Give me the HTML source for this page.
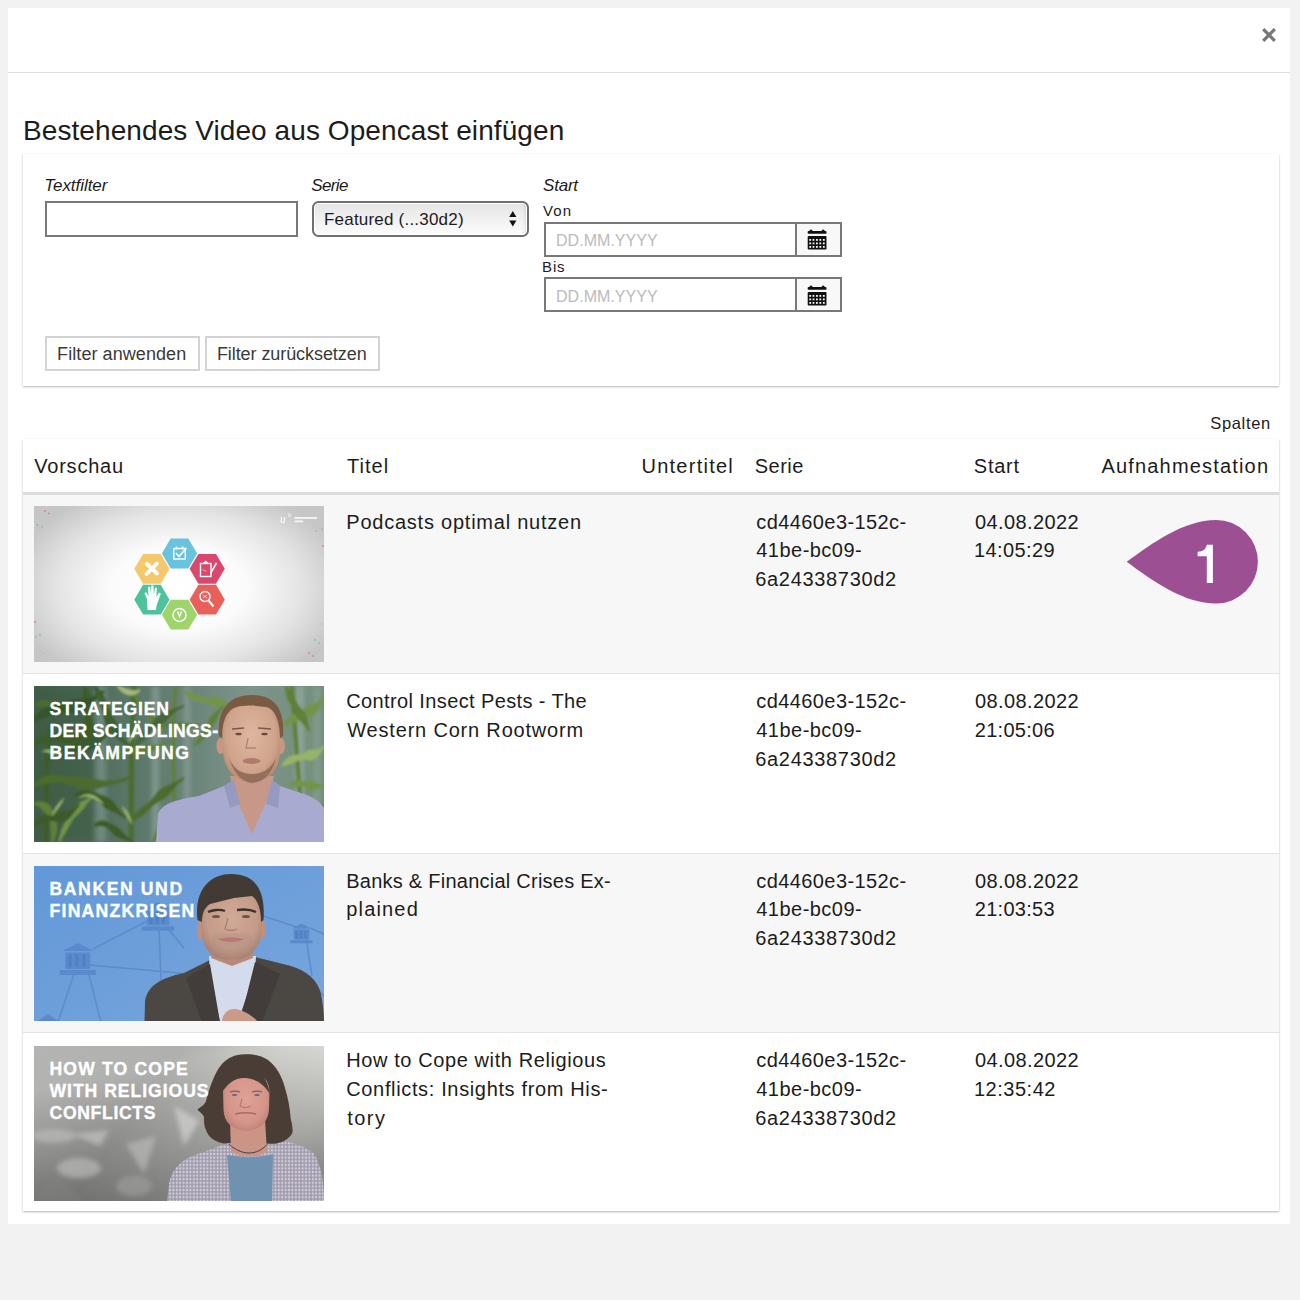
<!DOCTYPE html>
<html><head><meta charset="utf-8"><style>
html,body{margin:0;padding:0;}
body{width:1300px;height:1300px;background:#f2f2f2;position:relative;overflow:hidden;font-family:"Liberation Sans",sans-serif;}
.t{position:absolute;white-space:nowrap;}
.modal{position:absolute;left:8px;top:8px;width:1282px;height:1216px;background:#fff;}
.hline{position:absolute;left:8px;top:72px;width:1282px;height:1px;background:#dedede;}
.card{position:absolute;background:#fff;box-shadow:0 1px 2px rgba(0,0,0,0.3);}
.inp{position:absolute;box-sizing:border-box;border:2px solid #787878;background:#fff;}
.calbtn{position:absolute;box-sizing:border-box;border:2px solid #787878;background:#f8f8f8;}
.sel{position:absolute;box-sizing:border-box;border:2px solid #707070;border-radius:6.5px;background:linear-gradient(#e5e5e5,#fcfcfc);box-shadow:inset 0 0 0 1px #fff, inset -5px 0 4px -4px rgba(0,0,0,0.15);}
.btn{position:absolute;box-sizing:border-box;border:2px solid #d3d3d3;background:#fff;}
.thumb{position:absolute;overflow:hidden;background:#888;}
</style></head><body>
<div class="modal"></div>
<div class="hline"></div>
<svg class="close" width="16" height="16" viewBox="0 0 16 16" style="position:absolute;left:1261px;top:27px"><path d="M2.2 2.2L13.8 13.8M13.8 2.2L2.2 13.8" stroke="#777" stroke-width="3.3" stroke-linecap="butt"/></svg>
<div class="card" style="left:23px;top:154px;width:1256px;height:232px"></div>
<div class="inp" style="left:45px;top:201.2px;width:252.5px;height:36.3px"></div>
<div class="sel" style="left:312px;top:201.2px;width:217px;height:36.3px"></div>
<svg width="10" height="18" style="position:absolute;left:508px;top:210px"><path d="M1.2 7L4.8 1.1L8.4 7Z M1.2 10.4L4.8 16.6L8.4 10.4Z" fill="#111"/></svg>
<div class="inp" style="left:543.5px;top:221.5px;width:298.5px;height:35px"></div>
<div class="calbtn" style="left:794.7px;top:221.5px;width:47.3px;height:35px"></div>
<svg width="22" height="24" viewBox="0 0 22 24" style="position:absolute;left:807px;top:228.0px"><rect x="0.7" y="3" width="18.8" height="2.8" rx="0.9" fill="#111"/><circle cx="4" cy="2.9" r="1.5" fill="#111"/><circle cx="16.2" cy="2.9" r="1.5" fill="#111"/><rect x="0.7" y="7.9" width="18.8" height="13.6" rx="0.9" fill="#111"/><rect x="2.30" y="11.00" width="1.8" height="1.8" fill="#f8f8f8"/><rect x="5.60" y="11.00" width="1.8" height="1.8" fill="#f8f8f8"/><rect x="9.00" y="11.00" width="1.8" height="1.8" fill="#f8f8f8"/><rect x="12.40" y="11.00" width="1.8" height="1.8" fill="#f8f8f8"/><rect x="15.90" y="11.00" width="1.8" height="1.8" fill="#f8f8f8"/><rect x="2.30" y="14.50" width="1.8" height="1.8" fill="#f8f8f8"/><rect x="5.60" y="14.50" width="1.8" height="1.8" fill="#f8f8f8"/><rect x="9.00" y="14.50" width="1.8" height="1.8" fill="#f8f8f8"/><rect x="12.40" y="14.50" width="1.8" height="1.8" fill="#f8f8f8"/><rect x="15.90" y="14.50" width="1.8" height="1.8" fill="#f8f8f8"/><rect x="2.30" y="18.00" width="1.8" height="1.8" fill="#f8f8f8"/><rect x="5.60" y="18.00" width="1.8" height="1.8" fill="#f8f8f8"/><rect x="9.00" y="18.00" width="1.8" height="1.8" fill="#f8f8f8"/><rect x="12.40" y="18.00" width="1.8" height="1.8" fill="#f8f8f8"/><rect x="15.90" y="18.00" width="1.8" height="1.8" fill="#f8f8f8"/></svg>
<div class="inp" style="left:543.5px;top:277.4px;width:298.5px;height:35px"></div>
<div class="calbtn" style="left:794.7px;top:277.4px;width:47.3px;height:35px"></div>
<svg width="22" height="24" viewBox="0 0 22 24" style="position:absolute;left:807px;top:283.9px"><rect x="0.7" y="3" width="18.8" height="2.8" rx="0.9" fill="#111"/><circle cx="4" cy="2.9" r="1.5" fill="#111"/><circle cx="16.2" cy="2.9" r="1.5" fill="#111"/><rect x="0.7" y="7.9" width="18.8" height="13.6" rx="0.9" fill="#111"/><rect x="2.30" y="11.00" width="1.8" height="1.8" fill="#f8f8f8"/><rect x="5.60" y="11.00" width="1.8" height="1.8" fill="#f8f8f8"/><rect x="9.00" y="11.00" width="1.8" height="1.8" fill="#f8f8f8"/><rect x="12.40" y="11.00" width="1.8" height="1.8" fill="#f8f8f8"/><rect x="15.90" y="11.00" width="1.8" height="1.8" fill="#f8f8f8"/><rect x="2.30" y="14.50" width="1.8" height="1.8" fill="#f8f8f8"/><rect x="5.60" y="14.50" width="1.8" height="1.8" fill="#f8f8f8"/><rect x="9.00" y="14.50" width="1.8" height="1.8" fill="#f8f8f8"/><rect x="12.40" y="14.50" width="1.8" height="1.8" fill="#f8f8f8"/><rect x="15.90" y="14.50" width="1.8" height="1.8" fill="#f8f8f8"/><rect x="2.30" y="18.00" width="1.8" height="1.8" fill="#f8f8f8"/><rect x="5.60" y="18.00" width="1.8" height="1.8" fill="#f8f8f8"/><rect x="9.00" y="18.00" width="1.8" height="1.8" fill="#f8f8f8"/><rect x="12.40" y="18.00" width="1.8" height="1.8" fill="#f8f8f8"/><rect x="15.90" y="18.00" width="1.8" height="1.8" fill="#f8f8f8"/></svg>
<div class="btn" style="left:45px;top:336px;width:154.5px;height:34.5px"></div>
<div class="btn" style="left:205px;top:336px;width:174.5px;height:34.5px"></div>
<div class="card" style="left:23px;top:438.5px;width:1256px;height:772.5px"></div>
<div style="position:absolute;left:23px;top:492px;width:1256px;height:2.5px;background:#dcdcdc"></div>
<div style="position:absolute;left:23px;top:494.5px;width:1256px;height:179.5px;background:#f7f7f7"></div>
<div style="position:absolute;left:23px;top:674px;width:1256px;height:179.5px;background:#fff"></div>
<div style="position:absolute;left:23px;top:673px;width:1256px;height:1px;background:#e3e3e3"></div>
<div style="position:absolute;left:23px;top:853.5px;width:1256px;height:179.5px;background:#f7f7f7"></div>
<div style="position:absolute;left:23px;top:852.5px;width:1256px;height:1px;background:#e3e3e3"></div>
<div style="position:absolute;left:23px;top:1033px;width:1256px;height:178px;background:#fff"></div>
<div style="position:absolute;left:23px;top:1032px;width:1256px;height:1px;background:#e3e3e3"></div>
<div class="thumb" style="left:34px;top:506px;width:290px;height:155.5px"><svg width="290" height="156" viewBox="0 0 290 156" style="display:block"><defs><radialGradient id="g1" cx="145" cy="82" r="170" gradientUnits="userSpaceOnUse" gradientTransform="translate(145 82) scale(1 0.62) translate(-145 -82)"><stop offset="0" stop-color="#ffffff"/><stop offset="0.4" stop-color="#fbfbfb"/><stop offset="0.72" stop-color="#e4e4e4"/><stop offset="1" stop-color="#c6c6c6"/></radialGradient></defs><rect width="290" height="156" fill="url(#g1)"/><path d="M127.9 47.5 L136.7 32.6 L154.3 32.6 L163.1 47.5 L154.3 62.4 L136.7 62.4Z" fill="#67c3de"/><path d="M100.3 62.8 L109.1 47.9 L126.7 47.9 L135.5 62.8 L126.7 77.7 L109.1 77.7Z" fill="#f4c86c"/><path d="M155.6 62.8 L164.4 47.9 L182.0 47.9 L190.8 62.8 L182.0 77.7 L164.4 77.7Z" fill="#d9486c"/><path d="M100.3 93.7 L109.1 78.8 L126.7 78.8 L135.5 93.7 L126.7 108.6 L109.1 108.6Z" fill="#4ec39b"/><path d="M155.6 93.7 L164.4 78.8 L182.0 78.8 L190.8 93.7 L182.0 108.6 L164.4 108.6Z" fill="#e9605a"/><path d="M127.9 108.7 L136.7 93.8 L154.3 93.8 L163.1 108.7 L154.3 123.6 L136.7 123.6Z" fill="#9fd46c"/><rect x="139.8" y="42.5" width="11.5" height="10.5" fill="none" stroke="#fff" stroke-width="1.4"/><path d="M142.5 40.5 V43.5 M148.5 40.5 V43.5" fill="none" stroke="#fff" stroke-width="1.4"/><path d="M142 47 L145 50.5 L152.5 42" fill="none" stroke="#fff" stroke-width="1.6"/><path d="M112.5 68 L123 57.5 M113 58 L123 67.5" stroke="#fff" stroke-width="3.8" stroke-linecap="round"/><rect x="166.5" y="57.5" width="10.5" height="13" fill="none" stroke="#fff" stroke-width="1.4"/><path d="M169.5 57.5 L171.8 55.5 L174 57.5" fill="none" stroke="#fff" stroke-width="1.4"/><path d="M176.5 67.5 L182.5 57" stroke="#fff" stroke-width="1.6"/><path d="M168.5 63.5 C170 65 171 64 172.5 65.5" stroke="#fff" stroke-width="0.6" fill="none"/><path d="M113.5 104 L113 93 L110.5 87.5 L112 86 L114.5 90 L114 81 L116.2 80.5 L117 88.5 L117.3 79.5 L119.5 79.5 L119.8 88.5 L121 81.5 L123 82 L122.3 91 L125 86.5 L126.8 87.5 L122.5 100 L122 104Z" fill="#fff"/><circle cx="171" cy="90.5" r="5" fill="none" stroke="#fff" stroke-width="1.4"/><path d="M174.5 94.5 L179.5 100.5" stroke="#fff" stroke-width="2"/><path d="M169 89 L173 92 M173 89 L169 92" stroke="#fff" stroke-width="0.6"/><circle cx="145.5" cy="109" r="6.5" fill="none" stroke="#fff" stroke-width="1.4"/><path d="M143.5 105.5 L145.5 110.5 L147.5 105.5" fill="none" stroke="#fff" stroke-width="1.5"/><text x="246" y="17" font-family="Liberation Serif" font-style="italic" font-size="11.5" fill="#fff" opacity="0.95">u</text><text x="254.3" y="10.8" font-family="Liberation Sans" font-size="5.5" fill="#fff" opacity="0.95">b</text><rect x="260.5" y="11" width="22.5" height="1.9" fill="#fff" opacity="0.8"/><rect x="260.5" y="14.5" width="8.7" height="1.7" fill="#fff" opacity="0.8"/><circle cx="11" cy="5" r="0.9" fill="#e07a9a"/><circle cx="15" cy="7.5" r="0.9" fill="#e07a9a"/><circle cx="3.5" cy="19" r="0.9" fill="#7cc8a8"/><circle cx="8" cy="21" r="0.9" fill="#7cc8a8"/><circle cx="1" cy="33" r="0.9" fill="#a8d880"/><circle cx="282" cy="25" r="0.9" fill="#7cc8c0"/><circle cx="288" cy="23" r="0.9" fill="#7cc8c0"/><circle cx="289" cy="40" r="0.9" fill="#e07a9a"/><circle cx="1" cy="116" r="0.9" fill="#e07a9a"/><circle cx="2" cy="131" r="0.9" fill="#7cc8a8"/><circle cx="6" cy="129" r="0.9" fill="#7cc8a8"/><circle cx="10" cy="147" r="0.9" fill="#a8d880"/><circle cx="14" cy="145" r="0.9" fill="#a8d880"/><circle cx="281" cy="134" r="0.9" fill="#7cc8a8"/><circle cx="285" cy="137" r="0.9" fill="#7cc8a8"/><circle cx="275" cy="147" r="0.9" fill="#e07a9a"/><circle cx="279" cy="150" r="0.9" fill="#e07a9a"/><circle cx="288" cy="118" r="0.9" fill="#a8d880"/></svg></div>
<div class="thumb" style="left:34px;top:686px;width:290px;height:155.5px"><svg width="290" height="156" viewBox="0 0 290 156" style="display:block"><defs><linearGradient id="bg2" x1="0" y1="0" x2="1" y2="0"><stop offset="0" stop-color="#40604c"/><stop offset="0.4" stop-color="#5e7a6c"/><stop offset="0.75" stop-color="#7e948c"/><stop offset="1" stop-color="#728e78"/></linearGradient><filter id="bl2" x="-10%" y="-10%" width="120%" height="120%"><feGaussianBlur stdDeviation="0.9"/></filter><filter id="bl2c" x="-10%" y="-10%" width="120%" height="120%"><feGaussianBlur stdDeviation="2.5"/></filter><filter id="bl2b"><feGaussianBlur stdDeviation="0.55"/></filter><radialGradient id="f2" cx="0.5" cy="0.45" r="0.6"><stop offset="0" stop-color="#deb6a0"/><stop offset="0.7" stop-color="#d0a48c"/><stop offset="1" stop-color="#b48670"/></radialGradient></defs><rect width="290" height="156" fill="url(#bg2)"/><g filter="url(#bl2c)" opacity="0.55"><rect x="20" y="0" width="8" height="156" fill="#7d9490"/><rect x="62" y="0" width="10" height="156" fill="#86a09a"/><rect x="118" y="0" width="7" height="156" fill="#9ab0ac"/><rect x="150" y="0" width="6" height="156" fill="#94aaa4"/><rect x="262" y="0" width="8" height="156" fill="#a0b4b0"/><rect x="280" y="0" width="6" height="156" fill="#90a8a0"/><rect x="0" y="0" width="60" height="156" fill="#3c5a40"/></g><g filter="url(#bl2)"><path d="M14.0 156.1 L14.2 151.6 L14.4 147.0 L14.5 142.4 L14.6 137.7 L14.6 133.0 L14.6 128.3 L14.6 123.6 L14.6 118.8 L14.6 114.0 L14.5 109.2 L14.5 104.4 L14.5 99.5 L14.5 94.6 L14.6 89.7 L14.6 84.8 L14.7 79.9 L14.9 75.0 L15.1 70.0 L15.4 65.1 L15.8 60.1 L16.2 55.2 L16.7 50.2 L17.3 45.3 L18.0 40.3 L14.0 39.7 L13.3 44.7 L12.7 49.8 L12.2 54.8 L11.8 59.8 L11.4 64.8 L11.1 69.8 L10.9 74.8 L10.7 79.8 L10.6 84.8 L10.6 89.7 L10.5 94.6 L10.5 99.5 L10.5 104.4 L10.5 109.2 L10.6 114.0 L10.6 118.8 L10.6 123.6 L10.6 128.3 L10.6 133.0 L10.6 137.7 L10.5 142.3 L10.4 146.9 L10.2 151.4 L10.0 155.9Z" fill="#3e5c26"/><path d="M99.5 156.1 L99.6 151.5 L99.7 146.9 L99.8 142.3 L99.8 137.5 L99.8 132.7 L99.8 127.7 L99.8 122.6 L99.8 117.3 L99.8 111.9 L99.8 106.3 L99.9 100.5 L99.9 94.5 L99.9 88.3 L100.0 81.8 L100.1 75.1 L100.2 68.0 L100.3 60.7 L100.5 53.1 L100.7 45.2 L101.0 36.9 L101.3 28.3 L101.6 19.3 L102.0 9.9 L102.5 0.1 L97.5 -0.1 L97.0 9.7 L96.6 19.1 L96.3 28.1 L96.0 36.8 L95.7 45.0 L95.5 53.0 L95.3 60.6 L95.2 68.0 L95.1 75.0 L95.0 81.7 L94.9 88.2 L94.9 94.5 L94.9 100.5 L94.8 106.3 L94.8 111.9 L94.8 117.3 L94.8 122.6 L94.8 127.7 L94.8 132.6 L94.8 137.5 L94.8 142.2 L94.7 146.9 L94.6 151.4 L94.5 155.9Z" fill="#4c6c2e"/><path d="M141.7 156.1 L142.0 150.3 L142.1 144.4 L142.2 138.6 L142.2 132.6 L142.1 126.7 L142.1 120.6 L142.0 114.5 L141.8 108.4 L141.7 102.2 L141.5 95.9 L141.4 89.6 L141.2 83.2 L141.1 76.7 L141.1 70.2 L141.0 63.6 L141.0 56.9 L141.1 50.1 L141.2 43.3 L141.4 36.3 L141.7 29.3 L142.0 22.1 L142.5 14.9 L143.1 7.6 L143.7 0.2 L140.3 -0.2 L139.6 7.3 L139.0 14.7 L138.5 21.9 L138.2 29.1 L137.9 36.2 L137.7 43.2 L137.6 50.1 L137.5 56.9 L137.5 63.6 L137.6 70.2 L137.6 76.8 L137.8 83.3 L137.9 89.7 L138.0 96.0 L138.2 102.3 L138.3 108.5 L138.5 114.6 L138.6 120.7 L138.6 126.7 L138.7 132.6 L138.7 138.5 L138.6 144.4 L138.5 150.2 L138.3 155.9Z" fill="#5e8038"/><path d="M272.0 155.8 L271.5 150.1 L271.0 144.2 L270.5 138.4 L270.0 132.5 L269.5 126.5 L269.0 120.5 L268.5 114.4 L268.0 108.3 L267.5 102.1 L267.0 95.8 L266.5 89.5 L266.0 83.1 L265.5 76.6 L265.0 70.1 L264.5 63.4 L264.0 56.7 L263.5 50.0 L263.0 43.1 L262.5 36.1 L262.0 29.1 L261.5 21.9 L261.0 14.7 L260.5 7.3 L260.0 -0.1 L256.0 0.1 L256.5 7.6 L257.0 14.9 L257.5 22.2 L258.0 29.3 L258.5 36.4 L259.0 43.4 L259.5 50.2 L260.0 57.0 L260.5 63.7 L261.0 70.4 L261.5 76.9 L262.0 83.4 L262.5 89.8 L263.0 96.1 L263.5 102.4 L264.0 108.6 L264.5 114.7 L265.0 120.8 L265.5 126.8 L266.0 132.8 L266.5 138.7 L267.0 144.6 L267.5 150.4 L268.0 156.2Z" fill="#5e8038"/><path d="M0.6 60.7 L3.5 58.9 L6.2 57.7 L8.6 56.9 L10.9 56.4 L12.9 56.0 L14.9 55.5 L16.9 55.2 L18.9 54.9 L21.0 54.9 L23.2 55.2 L25.3 55.8 L27.6 56.7 L29.9 57.5 L32.4 58.1 L35.0 58.5 L37.8 58.3 L40.6 57.7 L43.5 56.7 L46.3 55.4 L49.0 53.9 L51.8 52.2 L54.6 50.3 L57.5 48.2 L60.5 45.6 L59.5 44.4 L56.3 46.4 L53.3 47.9 L50.3 48.9 L47.5 49.5 L44.8 49.5 L42.3 49.2 L40.0 48.8 L37.8 48.3 L35.6 48.1 L33.4 48.0 L31.0 48.1 L28.7 48.3 L26.2 48.5 L23.8 48.6 L21.4 48.6 L18.9 48.4 L16.3 48.3 L13.7 48.5 L11.0 49.1 L8.4 50.3 L5.9 51.9 L3.7 54.1 L1.5 56.6 L-0.6 59.3Z" fill="#3e5c26"/><path d="M0.9 101.2 L4.3 99.6 L7.5 98.7 L10.5 98.1 L13.3 97.7 L15.9 97.4 L18.6 97.0 L21.3 96.7 L24.3 96.5 L27.4 96.7 L30.6 97.4 L33.9 98.4 L37.3 99.8 L40.9 101.1 L44.7 102.4 L48.8 103.2 L53.2 103.5 L57.8 103.2 L62.6 102.5 L67.5 101.4 L72.7 100.2 L78.0 98.7 L83.5 97.2 L89.3 95.4 L95.4 93.2 L94.6 90.8 L88.5 92.6 L82.7 93.9 L77.2 94.6 L72.0 94.8 L67.1 94.3 L62.6 93.6 L58.3 92.6 L54.2 91.8 L50.3 91.2 L46.5 90.8 L42.7 90.7 L39.0 90.7 L35.3 90.7 L31.8 90.5 L28.3 90.1 L25.0 89.5 L21.6 89.0 L18.2 88.7 L14.7 88.9 L11.2 89.7 L7.9 91.2 L4.8 93.3 L1.9 95.9 L-0.9 98.8Z" fill="#4c6c2e"/><path d="M19.6 156.4 L20.8 153.2 L21.9 150.1 L22.7 147.0 L23.1 144.0 L23.2 141.1 L22.9 138.3 L22.4 135.6 L21.7 133.1 L20.9 130.8 L20.2 128.5 L19.4 126.3 L18.6 124.1 L17.6 122.1 L16.5 120.2 L15.1 118.6 L13.4 117.3 L11.6 116.4 L9.6 115.8 L7.7 115.6 L5.9 115.6 L4.2 115.6 L2.6 115.8 L1.0 116.2 L-0.3 116.6 L0.3 119.4 L1.5 119.3 L2.6 119.4 L3.7 119.8 L4.7 120.4 L5.6 121.2 L6.4 122.2 L7.1 123.2 L7.9 124.2 L8.8 125.1 L9.8 126.0 L11.0 127.0 L12.2 128.1 L13.3 129.4 L14.3 131.0 L15.1 132.7 L15.6 134.7 L16.0 136.8 L16.2 139.1 L16.3 141.4 L16.5 143.9 L16.6 146.5 L16.7 149.4 L16.7 152.4 L16.4 155.6Z" fill="#5e8038"/><path d="M40.5 111.1 L43.1 110.6 L45.5 110.4 L47.8 110.5 L49.8 110.6 L51.8 110.7 L53.7 110.8 L55.7 110.9 L57.7 111.3 L59.7 111.9 L61.7 112.9 L63.5 114.2 L65.2 115.9 L66.8 117.6 L68.5 119.4 L70.4 121.0 L72.5 122.4 L74.8 123.7 L77.2 124.8 L79.8 126.0 L82.3 127.2 L84.7 128.5 L87.0 129.9 L89.2 131.4 L91.4 132.8 L92.6 131.2 L90.6 129.5 L88.6 127.8 L86.8 125.9 L85.0 123.8 L83.4 121.6 L81.8 119.3 L80.1 117.1 L78.3 115.1 L76.3 113.3 L74.0 111.8 L71.6 110.6 L69.1 109.6 L66.6 108.8 L64.1 107.9 L61.8 106.9 L59.5 105.9 L57.1 105.0 L54.6 104.3 L52.1 103.9 L49.4 104.0 L46.8 104.7 L44.3 105.8 L41.8 107.2 L39.5 108.9Z" fill="#3e5c26"/><path d="M97.8 135.9 L100.4 134.5 L103.0 133.1 L105.6 131.6 L108.0 130.0 L110.2 128.2 L112.2 126.3 L114.2 124.2 L116.1 122.2 L118.2 120.2 L120.3 118.5 L122.7 116.9 L125.1 115.5 L127.6 114.2 L130.0 112.7 L132.3 111.1 L134.3 109.3 L136.2 107.2 L138.0 104.9 L139.8 102.6 L141.7 100.4 L143.7 98.3 L145.9 96.4 L148.2 94.6 L150.6 92.8 L149.4 91.2 L146.9 92.7 L144.3 94.2 L141.7 95.6 L139.1 96.9 L136.4 98.1 L133.6 99.3 L131.0 100.5 L128.4 101.9 L126.1 103.6 L124.0 105.6 L122.2 107.7 L120.4 110.0 L118.6 112.2 L116.7 114.3 L114.6 116.2 L112.5 118.0 L110.2 119.6 L107.9 121.3 L105.7 123.1 L103.6 125.0 L101.7 127.1 L99.9 129.4 L98.1 131.8 L96.2 134.1Z" fill="#4c6c2e"/><path d="M26.0 156.4 L27.6 153.4 L29.3 150.6 L30.9 148.0 L32.4 145.4 L33.8 143.0 L35.1 140.6 L36.3 138.3 L37.5 136.2 L38.7 134.1 L40.1 132.3 L41.6 130.6 L43.2 129.1 L44.8 127.7 L46.3 126.3 L47.8 124.8 L49.1 123.3 L50.4 121.7 L51.6 120.0 L52.8 118.3 L54.1 116.7 L55.6 115.1 L57.1 113.6 L58.8 112.2 L60.5 110.8 L59.5 109.2 L57.5 110.3 L55.6 111.4 L53.6 112.5 L51.7 113.5 L49.6 114.5 L47.6 115.5 L45.7 116.6 L43.8 117.9 L42.2 119.3 L40.6 121.0 L39.3 122.9 L38.0 124.9 L36.8 127.0 L35.6 129.1 L34.3 131.2 L32.9 133.3 L31.5 135.5 L30.1 137.9 L28.8 140.4 L27.6 143.1 L26.6 146.0 L25.7 149.0 L24.9 152.3 L24.0 155.6Z" fill="#729448"/><path d="M48.7 0.4 L49.0 3.6 L49.0 6.7 L49.0 9.7 L49.0 12.6 L49.2 15.5 L49.6 18.3 L50.1 21.1 L50.5 23.8 L50.8 26.7 L50.8 29.5 L50.5 32.3 L50.0 35.2 L49.6 38.2 L49.3 41.2 L49.5 44.2 L50.1 47.2 L51.2 50.2 L52.7 53.1 L54.5 55.9 L56.3 58.8 L58.1 61.6 L59.9 64.6 L61.9 67.6 L64.0 70.6 L66.0 69.4 L64.1 66.2 L62.6 63.1 L61.5 60.1 L60.8 57.0 L60.5 53.9 L60.5 51.0 L60.6 48.1 L60.5 45.4 L60.3 42.7 L59.8 40.1 L59.1 37.4 L58.2 34.8 L57.5 32.0 L57.0 29.3 L56.8 26.4 L56.8 23.6 L57.0 20.6 L57.0 17.7 L56.9 14.7 L56.4 11.6 L55.5 8.6 L54.3 5.6 L52.9 2.6 L51.3 -0.4Z" fill="#3e5c26"/><path d="M70.7 75.8 L72.9 74.5 L75.1 73.5 L77.3 72.7 L79.5 72.0 L81.6 71.2 L83.8 70.4 L86.0 69.6 L88.4 68.9 L90.9 68.3 L93.6 68.1 L96.3 68.0 L99.1 68.2 L102.0 68.4 L105.0 68.4 L108.0 68.2 L111.0 67.6 L114.1 66.6 L117.1 65.4 L120.1 64.0 L123.1 62.5 L126.2 60.9 L129.2 59.3 L132.3 57.6 L135.4 55.8 L134.6 54.2 L131.4 55.9 L128.3 57.2 L125.1 58.2 L122.0 58.8 L118.8 59.2 L115.7 59.3 L112.7 59.3 L109.7 59.5 L106.8 59.8 L104.0 60.3 L101.2 61.0 L98.4 61.8 L95.6 62.6 L92.9 63.2 L90.2 63.7 L87.5 64.1 L84.8 64.4 L82.2 64.9 L79.6 65.6 L77.1 66.7 L74.8 68.2 L72.8 70.0 L70.9 72.0 L69.3 74.2Z" fill="#5e8038"/><path d="M0.6 21.0 L2.6 20.4 L4.5 20.2 L6.1 20.2 L7.5 20.3 L8.9 20.3 L10.3 20.4 L11.7 20.5 L13.2 20.7 L14.7 21.1 L16.3 21.7 L17.9 22.4 L19.5 23.3 L21.1 24.3 L23.0 25.1 L25.0 25.7 L27.1 25.9 L29.3 25.8 L31.6 25.4 L33.9 24.7 L36.2 23.9 L38.4 22.9 L40.8 21.8 L43.1 20.5 L45.5 18.9 L44.5 17.1 L42.0 18.2 L39.6 18.9 L37.4 19.3 L35.4 19.3 L33.4 19.0 L31.7 18.5 L30.0 17.9 L28.5 17.3 L26.9 16.9 L25.3 16.6 L23.6 16.3 L21.8 16.2 L20.0 15.9 L18.2 15.6 L16.4 15.2 L14.6 14.7 L12.7 14.2 L10.8 13.9 L8.8 13.8 L6.8 14.2 L4.8 14.9 L2.9 16.0 L1.1 17.4 L-0.6 19.0Z" fill="#4c6c2e"/><path d="M99.2 10.7 L100.7 13.0 L102.0 15.2 L103.2 17.4 L104.5 19.6 L105.9 21.6 L107.4 23.4 L109.0 25.2 L110.6 27.0 L112.1 28.8 L113.4 30.7 L114.6 32.6 L115.7 34.6 L116.9 36.6 L118.3 38.4 L119.9 40.0 L121.8 41.2 L124.0 42.0 L126.3 42.4 L128.6 42.5 L130.8 42.4 L133.1 42.2 L135.4 41.9 L137.7 41.5 L140.2 40.9 L139.8 39.1 L137.4 39.5 L135.2 39.6 L133.2 39.3 L131.4 38.7 L129.9 37.7 L128.6 36.6 L127.4 35.5 L126.3 34.3 L125.1 33.3 L123.7 32.4 L122.2 31.4 L120.5 30.4 L118.8 29.1 L117.3 27.7 L115.8 26.0 L114.6 24.1 L113.3 22.1 L112.1 20.0 L110.7 17.9 L109.1 16.0 L107.2 14.2 L105.2 12.5 L103.0 10.8 L100.8 9.3Z" fill="#5e8038"/><path d="M60.5 140.9 L62.5 140.2 L64.3 139.9 L65.8 139.9 L67.1 140.0 L68.2 140.1 L69.2 140.2 L70.3 140.5 L71.5 140.8 L72.7 141.4 L73.8 142.2 L75.0 143.3 L76.1 144.6 L77.2 146.0 L78.5 147.3 L80.0 148.7 L81.7 149.9 L83.6 151.0 L85.7 152.0 L87.8 152.9 L90.1 153.8 L92.4 154.6 L94.7 155.5 L97.2 156.2 L99.7 156.9 L100.3 155.1 L98.0 154.1 L95.9 153.0 L93.9 151.7 L92.2 150.3 L90.6 148.7 L89.2 147.1 L87.8 145.5 L86.5 144.0 L85.0 142.6 L83.5 141.4 L81.9 140.4 L80.2 139.4 L78.5 138.5 L76.9 137.6 L75.3 136.8 L73.7 135.9 L72.1 135.2 L70.3 134.6 L68.4 134.4 L66.5 134.6 L64.6 135.3 L62.8 136.3 L61.1 137.6 L59.5 139.1Z" fill="#3e5c26"/><path d="M121.3 156.5 L122.4 154.7 L123.5 153.0 L124.7 151.5 L125.8 149.9 L126.9 148.3 L127.9 146.7 L129.0 145.1 L130.2 143.5 L131.5 141.9 L132.9 140.5 L134.6 139.2 L136.3 137.9 L138.2 136.8 L140.0 135.5 L141.8 134.2 L143.6 132.7 L145.3 131.1 L147.0 129.3 L148.7 127.5 L150.5 125.7 L152.4 123.9 L154.4 122.3 L156.5 120.6 L158.7 119.0 L157.3 117.0 L155.0 118.3 L152.7 119.7 L150.4 120.9 L148.0 122.1 L145.7 123.2 L143.4 124.2 L141.1 125.3 L138.9 126.6 L136.9 128.0 L135.1 129.5 L133.4 131.3 L131.9 133.1 L130.4 134.9 L129.0 136.6 L127.5 138.3 L126.0 139.9 L124.5 141.6 L123.1 143.3 L121.8 145.1 L120.8 147.0 L120.0 149.1 L119.4 151.2 L119.0 153.4 L118.7 155.5Z" fill="#5e8038"/><path d="M1.1 36.2 L4.1 34.5 L7.0 33.4 L9.7 32.4 L12.1 31.6 L14.4 30.7 L16.7 29.7 L18.9 28.6 L21.3 27.6 L23.8 26.9 L26.4 26.6 L29.2 26.6 L32.1 26.8 L35.1 27.1 L38.3 27.1 L41.5 26.7 L44.7 25.7 L47.8 24.1 L51.0 22.0 L54.0 19.7 L57.1 17.2 L60.4 14.6 L63.7 12.0 L67.3 9.2 L70.9 6.1 L69.1 3.9 L65.4 6.7 L61.7 8.9 L58.0 10.7 L54.4 11.9 L50.9 12.5 L47.5 12.8 L44.3 13.0 L41.3 13.2 L38.4 13.7 L35.7 14.5 L33.1 15.7 L30.4 16.9 L27.7 18.1 L25.0 19.0 L22.3 19.7 L19.5 20.1 L16.6 20.5 L13.6 21.1 L10.7 22.0 L8.0 23.5 L5.4 25.5 L3.0 28.0 L0.9 30.8 L-1.1 33.8Z" fill="#36542c"/><path d="M16.0 76.1 L19.0 74.4 L21.8 73.1 L24.5 72.1 L26.9 71.2 L29.3 70.3 L31.5 69.2 L33.8 68.1 L36.1 67.1 L38.6 66.3 L41.1 65.8 L43.8 65.7 L46.7 65.7 L49.6 65.7 L52.7 65.5 L55.7 64.7 L58.7 63.4 L61.5 61.5 L64.3 59.2 L66.9 56.6 L69.5 53.8 L72.2 50.9 L75.0 47.8 L78.0 44.5 L80.9 40.8 L79.1 39.2 L75.8 42.5 L72.7 45.4 L69.5 47.7 L66.3 49.4 L63.1 50.6 L60.0 51.4 L57.0 52.0 L54.3 52.5 L51.7 53.2 L49.3 54.2 L47.0 55.5 L44.6 56.8 L42.1 58.0 L39.6 59.1 L37.0 59.8 L34.3 60.3 L31.5 60.8 L28.6 61.4 L25.8 62.4 L23.1 63.9 L20.6 65.9 L18.2 68.3 L16.0 71.0 L14.0 73.9Z" fill="#3a5a30"/><path d="M58.9 0.8 L60.2 3.6 L61.2 6.3 L62.1 9.0 L63.0 11.5 L63.9 14.0 L64.9 16.4 L65.9 18.8 L66.9 21.2 L67.8 23.6 L68.6 26.2 L69.2 28.8 L69.8 31.5 L70.4 34.2 L71.2 37.0 L72.3 39.7 L73.8 42.3 L75.7 44.8 L77.9 47.1 L80.2 49.4 L82.8 51.7 L85.4 53.9 L88.1 56.2 L91.1 58.6 L94.2 60.9 L95.8 59.1 L93.0 56.4 L90.6 53.8 L88.5 51.1 L86.8 48.3 L85.4 45.6 L84.3 42.9 L83.4 40.2 L82.5 37.7 L81.5 35.3 L80.3 33.0 L79.0 30.8 L77.7 28.5 L76.4 26.2 L75.3 23.8 L74.3 21.4 L73.4 18.8 L72.6 16.2 L71.7 13.6 L70.6 11.0 L69.2 8.5 L67.5 6.0 L65.5 3.7 L63.4 1.4 L61.1 -0.8Z" fill="#3e5e2e"/><path d="M100.9 60.8 L103.1 59.4 L105.4 57.9 L107.6 56.4 L109.6 54.8 L111.4 53.0 L113.0 51.1 L114.6 49.1 L116.1 47.1 L117.7 45.3 L119.5 43.6 L121.6 42.1 L123.7 40.8 L125.9 39.6 L128.1 38.3 L130.1 36.9 L132.1 35.3 L133.9 33.4 L135.7 31.4 L137.6 29.3 L139.7 27.3 L142.1 25.5 L144.6 23.8 L147.4 22.3 L150.4 20.9 L149.6 19.1 L146.5 20.2 L143.5 21.4 L140.5 22.5 L137.6 23.5 L134.7 24.4 L131.8 25.4 L129.0 26.4 L126.5 27.7 L124.1 29.3 L122.1 31.1 L120.4 33.2 L118.8 35.4 L117.2 37.6 L115.6 39.6 L113.9 41.5 L112.1 43.2 L110.1 44.9 L108.2 46.6 L106.4 48.3 L104.8 50.3 L103.3 52.4 L101.9 54.6 L100.6 56.9 L99.1 59.2Z" fill="#46663a"/><path d="M0.9 141.0 L3.2 139.8 L5.3 139.1 L7.3 138.5 L9.1 138.1 L10.7 137.5 L12.3 136.9 L13.9 136.2 L15.5 135.6 L17.3 135.2 L19.1 135.1 L21.0 135.3 L23.0 135.7 L25.1 136.1 L27.2 136.2 L29.4 136.0 L31.6 135.2 L33.7 133.9 L35.6 132.2 L37.3 130.2 L39.0 128.2 L40.7 126.0 L42.4 123.8 L44.1 121.4 L45.9 118.7 L44.1 117.3 L42.1 119.8 L40.1 121.7 L38.1 123.3 L36.0 124.3 L33.9 124.8 L31.9 125.0 L30.1 125.1 L28.4 125.1 L26.8 125.4 L25.3 125.9 L23.7 126.7 L22.0 127.5 L20.2 128.3 L18.4 128.9 L16.5 129.3 L14.5 129.4 L12.4 129.5 L10.2 129.7 L8.1 130.3 L5.9 131.3 L4.0 132.8 L2.2 134.6 L0.6 136.7 L-0.9 139.0Z" fill="#3c5a2a"/><path d="M82.5 0.7 L83.2 1.6 L84.0 2.4 L84.7 3.3 L85.5 4.1 L86.4 4.9 L87.2 5.6 L88.1 6.4 L89.1 7.0 L90.1 7.6 L91.1 8.2 L92.2 8.6 L93.3 9.0 L94.4 9.3 L95.6 9.5 L96.8 9.5 L98.0 9.5 L99.2 9.3 L100.4 9.0 L101.5 8.5 L102.6 8.0 L103.7 7.3 L104.7 6.6 L105.6 5.7 L106.5 4.7 L105.5 3.3 L104.4 3.7 L103.3 4.0 L102.3 4.2 L101.4 4.3 L100.5 4.3 L99.7 4.3 L98.9 4.2 L98.1 4.0 L97.3 3.9 L96.5 3.7 L95.8 3.5 L95.0 3.2 L94.1 3.0 L93.3 2.7 L92.4 2.5 L91.5 2.2 L90.6 1.8 L89.6 1.5 L88.6 1.2 L87.6 0.8 L86.6 0.4 L85.6 0.1 L84.6 -0.3 L83.5 -0.7Z" fill="#a4b878"/><path d="M130.4 41.0 L131.8 40.9 L133.0 40.9 L134.2 41.1 L135.3 41.3 L136.3 41.4 L137.4 41.4 L138.6 41.4 L139.8 41.5 L141.1 41.6 L142.4 42.0 L143.7 42.4 L145.1 43.0 L146.5 43.6 L148.0 44.0 L149.6 44.3 L151.2 44.3 L153.0 44.1 L154.7 43.6 L156.5 42.9 L158.2 42.2 L160.0 41.5 L161.8 40.7 L163.6 39.8 L165.4 38.9 L164.6 37.1 L162.7 37.7 L161.0 38.1 L159.2 38.3 L157.6 38.2 L156.0 38.0 L154.5 37.6 L153.1 37.1 L151.7 36.7 L150.4 36.5 L149.0 36.4 L147.6 36.4 L146.2 36.5 L144.8 36.6 L143.3 36.5 L141.9 36.4 L140.5 36.1 L139.1 35.9 L137.7 35.7 L136.3 35.7 L134.8 35.9 L133.3 36.4 L132.0 37.1 L130.7 38.0 L129.6 39.0Z" fill="#5a7a40"/><path d="M45.1 112.3 L46.4 111.7 L47.7 111.3 L48.9 111.0 L50.0 110.8 L51.1 110.7 L52.1 110.7 L53.1 110.8 L54.0 110.9 L55.0 111.1 L55.9 111.3 L56.8 111.6 L57.7 111.9 L58.6 112.3 L59.6 112.7 L60.5 113.1 L61.5 113.6 L62.5 114.1 L63.5 114.6 L64.5 115.2 L65.5 115.8 L66.6 116.4 L67.7 117.0 L68.7 117.6 L69.8 118.2 L70.2 117.8 L69.3 116.9 L68.4 116.0 L67.5 115.2 L66.6 114.3 L65.7 113.5 L64.8 112.7 L63.8 112.0 L62.9 111.3 L61.9 110.6 L60.9 110.1 L59.8 109.5 L58.8 109.1 L57.7 108.7 L56.6 108.5 L55.4 108.3 L54.3 108.2 L53.1 108.3 L51.9 108.4 L50.7 108.7 L49.5 109.1 L48.4 109.6 L47.2 110.2 L46.0 110.9 L44.9 111.7Z" fill="#98b468"/><path d="M8.2 66.3 L9.0 66.0 L9.7 65.8 L10.4 65.8 L11.1 65.8 L11.8 65.9 L12.4 66.0 L13.1 66.2 L13.8 66.4 L14.5 66.7 L15.2 66.9 L16.0 67.2 L16.8 67.4 L17.6 67.7 L18.5 67.9 L19.4 68.1 L20.3 68.2 L21.3 68.3 L22.3 68.3 L23.3 68.2 L24.2 68.0 L25.2 67.7 L26.2 67.4 L27.2 66.9 L28.1 66.3 L27.9 65.7 L26.8 66.0 L25.9 66.2 L25.0 66.2 L24.1 66.2 L23.2 66.1 L22.4 66.0 L21.6 65.8 L20.8 65.6 L20.1 65.3 L19.3 65.1 L18.5 64.8 L17.7 64.6 L16.9 64.3 L16.0 64.1 L15.2 63.9 L14.4 63.8 L13.5 63.7 L12.6 63.7 L11.8 63.8 L10.9 64.0 L10.1 64.3 L9.3 64.7 L8.5 65.2 L7.8 65.7Z" fill="#98b468"/><path d="M95.2 56.1 L95.6 55.4 L96.0 54.8 L96.4 54.2 L96.8 53.6 L97.2 53.1 L97.6 52.6 L98.1 52.2 L98.5 51.7 L98.9 51.2 L99.3 50.7 L99.7 50.3 L100.1 49.8 L100.5 49.3 L100.9 48.8 L101.3 48.2 L101.7 47.7 L102.0 47.1 L102.4 46.4 L102.7 45.8 L103.1 45.1 L103.4 44.4 L103.7 43.7 L104.0 42.9 L104.2 42.1 L103.8 41.9 L103.3 42.5 L102.8 43.2 L102.3 43.7 L101.8 44.3 L101.3 44.8 L100.8 45.3 L100.4 45.8 L99.9 46.3 L99.4 46.7 L99.0 47.2 L98.6 47.7 L98.2 48.2 L97.8 48.7 L97.4 49.3 L97.0 49.8 L96.6 50.4 L96.3 51.0 L96.0 51.6 L95.7 52.3 L95.5 52.9 L95.3 53.6 L95.1 54.4 L94.9 55.1 L94.8 55.9Z" fill="#b8cc88"/><path d="M18.3 130.1 L18.9 129.2 L19.5 128.4 L20.2 127.5 L20.8 126.8 L21.4 126.0 L22.0 125.3 L22.6 124.6 L23.1 123.9 L23.7 123.2 L24.2 122.5 L24.7 121.8 L25.2 121.1 L25.7 120.5 L26.2 119.8 L26.6 119.1 L27.1 118.4 L27.5 117.6 L27.9 116.9 L28.3 116.2 L28.7 115.4 L29.1 114.6 L29.5 113.8 L29.9 113.0 L30.2 112.2 L29.8 111.8 L29.1 112.5 L28.5 113.1 L27.9 113.7 L27.3 114.3 L26.7 114.9 L26.1 115.5 L25.5 116.1 L24.9 116.8 L24.4 117.4 L23.8 118.0 L23.3 118.7 L22.8 119.4 L22.3 120.1 L21.8 120.8 L21.3 121.6 L20.9 122.4 L20.4 123.2 L20.0 124.0 L19.6 124.9 L19.2 125.9 L18.8 126.8 L18.5 127.8 L18.1 128.8 L17.7 129.9Z" fill="#98b468"/><path d="M87.8 120.2 L88.1 120.9 L88.5 121.6 L88.8 122.4 L89.2 123.1 L89.5 123.9 L89.8 124.7 L90.2 125.4 L90.5 126.2 L90.9 127.0 L91.3 127.8 L91.7 128.5 L92.0 129.3 L92.5 130.1 L92.9 130.9 L93.3 131.6 L93.8 132.4 L94.2 133.1 L94.7 133.9 L95.2 134.6 L95.7 135.3 L96.2 136.0 L96.7 136.7 L97.2 137.4 L97.7 138.1 L98.3 137.9 L98.0 137.0 L97.8 136.2 L97.6 135.4 L97.3 134.5 L97.0 133.7 L96.8 132.9 L96.5 132.0 L96.2 131.2 L95.8 130.4 L95.5 129.5 L95.1 128.7 L94.7 127.9 L94.3 127.1 L93.8 126.4 L93.4 125.6 L92.9 124.9 L92.3 124.2 L91.8 123.5 L91.2 122.8 L90.7 122.2 L90.1 121.5 L89.5 120.9 L88.9 120.4 L88.2 119.8Z" fill="#98b468"/><path d="M250.9 41.0 L253.2 39.7 L255.4 38.8 L257.6 37.9 L259.5 37.1 L261.3 36.1 L262.9 35.1 L264.5 34.0 L266.1 32.9 L267.8 31.9 L269.6 31.3 L271.6 30.9 L273.6 30.6 L275.7 30.4 L277.7 29.9 L279.7 29.0 L281.4 27.8 L282.9 26.1 L284.2 24.1 L285.4 21.9 L286.4 19.8 L287.5 17.6 L288.7 15.3 L289.8 13.0 L291.0 10.5 L289.0 9.5 L287.6 11.7 L286.1 13.7 L284.5 15.3 L282.8 16.5 L280.9 17.4 L279.0 18.0 L277.3 18.4 L275.6 18.9 L274.2 19.6 L272.8 20.6 L271.5 21.8 L270.2 23.1 L268.7 24.4 L267.1 25.5 L265.4 26.4 L263.5 27.1 L261.5 27.8 L259.4 28.5 L257.4 29.5 L255.5 30.8 L253.7 32.5 L252.0 34.5 L250.5 36.7 L249.1 39.0Z" fill="#729448"/><path d="M248.9 81.0 L251.3 79.8 L253.7 79.0 L255.9 78.3 L258.0 77.7 L259.8 77.0 L261.6 76.2 L263.3 75.3 L265.0 74.5 L266.8 74.0 L268.6 73.7 L270.5 73.8 L272.3 74.1 L274.3 74.4 L276.2 74.5 L278.1 74.3 L280.0 73.6 L281.7 72.5 L283.3 71.0 L284.7 69.3 L286.0 67.7 L287.2 66.0 L288.5 64.3 L289.7 62.6 L290.9 60.7 L289.1 59.3 L287.7 60.9 L286.3 62.2 L284.8 63.1 L283.2 63.6 L281.5 63.8 L279.9 63.7 L278.4 63.5 L276.9 63.5 L275.5 63.7 L274.0 64.2 L272.5 65.0 L270.9 65.9 L269.2 66.8 L267.4 67.6 L265.5 68.1 L263.4 68.4 L261.3 68.7 L259.1 69.1 L256.8 69.9 L254.7 71.0 L252.6 72.6 L250.7 74.5 L248.9 76.7 L247.1 79.0Z" fill="#98b468"/><path d="M250.9 0.4 L251.2 3.0 L251.5 5.6 L252.0 8.1 L252.6 10.5 L253.5 12.7 L254.5 14.9 L255.7 16.8 L256.8 18.7 L258.0 20.6 L259.0 22.5 L259.9 24.5 L260.7 26.4 L261.5 28.3 L262.3 30.1 L263.3 31.8 L264.5 33.4 L265.8 34.8 L267.2 36.2 L268.6 37.5 L269.9 38.9 L271.1 40.4 L272.2 41.9 L273.1 43.6 L274.0 45.4 L276.0 44.6 L275.5 42.7 L275.0 40.7 L274.5 38.8 L274.0 36.8 L273.6 34.8 L273.1 32.7 L272.6 30.7 L271.8 28.8 L270.9 27.0 L269.8 25.4 L268.5 23.8 L267.1 22.3 L265.7 20.8 L264.4 19.2 L263.2 17.5 L262.2 15.7 L261.3 13.8 L260.3 11.9 L259.3 9.9 L258.2 8.0 L257.0 6.0 L255.7 4.0 L254.4 1.9 L253.1 -0.4Z" fill="#5e8038"/><path d="M255.6 101.1 L257.4 100.7 L259.1 100.7 L260.6 100.8 L262.0 100.8 L263.3 100.8 L264.6 100.6 L265.9 100.4 L267.3 100.3 L268.7 100.3 L270.1 100.7 L271.5 101.3 L272.8 102.2 L274.1 103.1 L275.5 103.9 L277.0 104.4 L278.6 104.5 L280.3 104.3 L282.0 103.7 L283.6 103.0 L285.1 102.2 L286.6 101.4 L287.9 100.6 L289.3 99.8 L290.5 98.9 L289.5 97.1 L288.2 97.8 L287.0 98.1 L285.7 98.1 L284.5 97.9 L283.4 97.3 L282.3 96.6 L281.2 95.8 L280.1 95.2 L278.9 94.8 L277.5 94.7 L276.0 94.8 L274.5 95.1 L272.8 95.2 L271.2 95.2 L269.6 95.1 L268.0 94.7 L266.3 94.3 L264.5 94.0 L262.7 93.9 L260.9 94.3 L259.1 95.1 L257.4 96.2 L255.8 97.5 L254.4 98.9Z" fill="#729448"/><path d="M149.3 6.0 L151.5 8.2 L153.7 10.3 L155.9 12.2 L158.3 13.7 L160.7 14.8 L163.1 15.5 L165.6 15.9 L167.9 16.3 L170.1 16.6 L172.3 17.1 L174.3 17.8 L176.3 18.6 L178.2 19.5 L180.1 20.3 L181.9 20.8 L183.7 21.0 L185.5 21.1 L187.4 21.0 L189.4 21.0 L191.5 21.3 L193.5 21.9 L195.4 22.8 L197.4 24.1 L199.3 25.7 L200.7 24.3 L198.9 22.4 L197.1 20.7 L195.3 19.0 L193.5 17.4 L191.7 15.8 L189.9 14.3 L188.0 13.0 L186.0 11.9 L183.9 11.3 L181.7 11.1 L179.6 11.1 L177.4 11.4 L175.3 11.6 L173.2 11.6 L171.2 11.3 L169.1 10.8 L167.1 10.0 L165.1 9.2 L163.1 8.4 L160.9 7.6 L158.6 6.9 L156.1 6.2 L153.5 5.3 L150.7 4.0Z" fill="#729448"/><path d="M160.6 60.7 L162.3 59.6 L164.1 58.5 L165.8 57.2 L167.3 55.7 L168.8 54.1 L170.1 52.4 L171.2 50.5 L172.4 48.7 L173.5 46.8 L174.8 45.0 L176.1 43.2 L177.4 41.5 L178.8 39.7 L180.1 38.0 L181.3 36.2 L182.3 34.4 L183.2 32.5 L184.0 30.6 L184.9 28.7 L185.8 26.8 L186.8 25.1 L187.9 23.5 L189.2 22.0 L190.5 20.6 L189.5 19.4 L187.9 20.6 L186.3 21.9 L184.7 23.3 L183.1 24.6 L181.5 26.1 L179.8 27.6 L178.3 29.1 L176.8 30.8 L175.5 32.6 L174.4 34.5 L173.5 36.5 L172.6 38.5 L171.7 40.5 L170.7 42.5 L169.7 44.4 L168.5 46.2 L167.3 47.9 L166.1 49.5 L164.9 51.2 L163.8 52.8 L162.7 54.5 L161.7 56.1 L160.6 57.8 L159.4 59.3Z" fill="#5e8038"/><path d="M270.7 130.6 L272.0 129.7 L273.2 129.0 L274.3 128.4 L275.3 128.0 L276.2 127.5 L277.0 127.0 L277.8 126.6 L278.5 126.1 L279.3 125.8 L280.1 125.6 L281.0 125.6 L281.8 125.6 L282.7 125.7 L283.6 125.7 L284.5 125.5 L285.4 125.1 L286.2 124.5 L287.0 123.8 L287.7 122.9 L288.3 122.1 L288.9 121.2 L289.5 120.3 L290.1 119.4 L290.6 118.5 L289.4 117.5 L288.6 118.2 L287.9 118.7 L287.2 119.0 L286.4 119.2 L285.6 119.2 L284.8 119.1 L284.1 119.0 L283.4 118.9 L282.7 119.0 L281.9 119.2 L281.2 119.6 L280.4 120.1 L279.6 120.6 L278.7 121.1 L277.8 121.5 L276.7 121.9 L275.7 122.3 L274.6 122.8 L273.5 123.4 L272.5 124.3 L271.6 125.4 L270.8 126.6 L270.0 128.0 L269.3 129.4Z" fill="#5e8038"/></g><g filter="url(#bl2b)"><path d="M122 156 L124 128 C128 118 140 114 165 110 L190 100 L200 94 L238 94 L246 100 L270 108 C282 112 288 118 290 122 L290 156Z" fill="#a8abcf"/><path d="M196 90 L240 90 L236 108 L218 148 L200 108Z" fill="#c79888"/><path d="M190 100 L200 94 L206 118 L196 122Z" fill="#9699c0"/><path d="M246 100 L238 94 L232 118 L244 122Z" fill="#9699c0"/><ellipse cx="186.5" cy="60" rx="4" ry="8" fill="#c89682"/><ellipse cx="247" cy="60" rx="4" ry="8" fill="#c89682"/><path d="M188 34 C188 16 200 11 217 11 C236 11 246 18 246 36 L246 66 C246 82 236 95 218 97 C200 95 190 82 189 66Z" fill="url(#f2)"/><path d="M195 72 C200 88 208 96 218 97 C230 96 238 88 242 72 C236 84 228 88 218 88 C208 88 200 84 195 72Z" fill="#94705c"/><ellipse cx="217.5" cy="75" rx="9" ry="3" fill="#b07a70"/><path d="M185 50 C183 22 196 9 218 9 C240 9 251 22 249 50 L246 52 C246 34 240 22 232 21 C220 19 208 19 200 22 C192 26 188 36 188 52Z" fill="#7a5a42"/><path d="M198 43 L210 42 M224 42 L237 43" stroke="#7a5a48" stroke-width="1.6"/><ellipse cx="204.5" cy="48" rx="3.2" ry="1.3" fill="#6a4a40"/><ellipse cx="230.5" cy="48" rx="3.2" ry="1.3" fill="#6a4a40"/><path d="M214 52 L212 62 L222 62" fill="none" stroke="#b08670" stroke-width="1.3"/></g><g font-family="Liberation Sans" font-weight="bold" fill="#fff" font-size="17.6" stroke="#fff" stroke-width="0.35"><text x="15.5" y="28.8" textLength="119.5" lengthAdjust="spacing">STRATEGIEN</text><text x="15.5" y="50.6" textLength="168.5" lengthAdjust="spacing">DER SCHÄDLINGS-</text><text x="15.5" y="72.8" textLength="139.5" lengthAdjust="spacing">BEKÄMPFUNG</text></g></svg></div>
<div class="thumb" style="left:34px;top:865.5px;width:290px;height:155.5px"><svg width="290" height="156" viewBox="0 0 290 156" style="display:block"><defs><linearGradient id="bg3" x1="0" y1="0" x2="1" y2="1"><stop offset="0" stop-color="#6298d8"/><stop offset="1" stop-color="#78a6dc"/></linearGradient><filter id="bl3"><feGaussianBlur stdDeviation="0.6"/></filter><radialGradient id="f3" cx="0.5" cy="0.42" r="0.6"><stop offset="0" stop-color="#d2aa98"/><stop offset="0.7" stop-color="#c49a88"/><stop offset="1" stop-color="#a88070"/></radialGradient></defs><rect width="290" height="156" fill="url(#bg3)"/><path d="M59 83 L115 54 M55 99 L145 107 L175 112 M39.6 109 L24 156 M55 109 L67 156 M125 60 L127 114 M132 60 L150 82 M229 50 L266 62 M272 72 L278 110 M276 62 L290 68 M280 120 L290 130" stroke="#5c8ccb" stroke-width="1.5" fill="none"/><g fill="#5a8acb"><path d="M43.8 77 L59.3 85.0 L28.3 85.0Z"/><rect x="31.3" y="86.5" width="25.0" height="16.5"/><rect x="25.8" y="104.0" width="36.0" height="5.0"/></g><rect x="34.3" y="88.5" width="3.0" height="12.5" fill="#4e80c4"/><rect x="41.3" y="88.5" width="3.0" height="12.5" fill="#4e80c4"/><rect x="48.3" y="88.5" width="3.0" height="12.5" fill="#4e80c4"/><g fill="#5a8acb"><path d="M124 36 L137.9 43.2 L110.0 43.2Z"/><rect x="112.8" y="44.5" width="22.5" height="14.8"/><rect x="107.8" y="60.3" width="32.4" height="4.5"/></g><rect x="115.5" y="46.4" width="2.7" height="11.2" fill="#4e80c4"/><rect x="121.8" y="46.4" width="2.7" height="11.2" fill="#4e80c4"/><rect x="128.1" y="46.4" width="2.7" height="11.2" fill="#4e80c4"/><g fill="#5a8acb"><path d="M267.5 57.5 L277.1 62.5 L257.9 62.5Z"/><rect x="259.8" y="63.4" width="15.5" height="10.2"/><rect x="256.3" y="74.2" width="22.3" height="3.1"/></g><rect x="261.6" y="64.6" width="1.9" height="7.8" fill="#4e80c4"/><rect x="265.9" y="64.6" width="1.9" height="7.8" fill="#4e80c4"/><rect x="270.3" y="64.6" width="1.9" height="7.8" fill="#4e80c4"/><path d="M2 156 L14 148 L26 156Z" fill="#5a8acb"/><g filter="url(#bl3)"><path d="M110.5 156 L111 136 C113 120 126 112 150 107 L176 94 L221 91 L256 99.7 C272 104 284 114 287 128 C289 138 290 148 290 156Z" fill="#4c4642"/><path d="M175 90 L222 90 L221 110 L212 132 L204 156 L186 156 L180 130 L176 110Z" fill="#d4dbec"/><path d="M176 98 L186 156 L168 156 L152 112Z" fill="#433d3a"/><path d="M221 96 L206 156 L228 156 L246 108Z" fill="#433d3a"/><path d="M188 156 C188 148 194 142 202 143 C211 145 219 150 224 156Z" fill="#c99a88"/><ellipse cx="166.5" cy="64.5" rx="3.6" ry="10" fill="#bf9080"/><ellipse cx="228" cy="63.5" rx="3.6" ry="10" fill="#bf9080"/><path d="M178 80 L218 80 L219 92 L198 100 L177 92Z" fill="#b88a7a"/><path d="M167 42 C167 28 178 22 197 22 C216 22 228 28 228.5 44 L228 64 C227 78 220 88 210 92 C203 94 191 94 184 92 C174 88 168 78 167.5 64Z" fill="url(#f3)"/><path d="M178 70 C186 66 210 66 218 70 L216 84 C210 90 186 90 180 84Z" fill="#ac9288" opacity="0.35"/><path d="M163.5 54 C160 24 176 8 197 8 C218 8 232 20 229.5 54 L227 56 C227 44 224 34 218 30 L200 32 L176 38 C170 42 168 48 168 56Z" fill="#433b35"/><path d="M174 46 C178 44 186 43 191 45 M203 44 C210 43 218 44 222 46" stroke="#3a322e" stroke-width="2.4" fill="none"/><ellipse cx="182" cy="50.5" rx="4" ry="1.5" fill="#6a5448"/><ellipse cx="212" cy="50.5" rx="4" ry="1.5" fill="#6a5448"/><path d="M194 52 L191 63 C194 65 200 65 203 63" stroke="#a8806e" stroke-width="1.3" fill="none"/><path d="M184 73 C192 71 202 71 210 73 C204 77 190 77 184 73Z" fill="#b87a70"/></g><g font-family="Liberation Sans" font-weight="bold" fill="#fff" font-size="17.6" stroke="#fff" stroke-width="0.35"><text x="15.5" y="28.7" textLength="132.6" lengthAdjust="spacing">BANKEN UND</text><text x="15.5" y="50.5" textLength="144.8" lengthAdjust="spacing">FINANZKRISEN</text></g></svg></div>
<div class="thumb" style="left:34px;top:1045.5px;width:290px;height:155.5px"><svg width="290" height="156" viewBox="0 0 290 156" style="display:block"><defs><linearGradient id="bg4" x1="0" y1="0" x2="1" y2="0.4"><stop offset="0" stop-color="#b4b4b2"/><stop offset="0.45" stop-color="#b0b0ae"/><stop offset="0.75" stop-color="#d4d4d0"/><stop offset="1" stop-color="#e8e8e4"/></linearGradient><linearGradient id="bg4b" x1="0" y1="0" x2="0.35" y2="1"><stop offset="0.25" stop-color="#000" stop-opacity="0"/><stop offset="1" stop-color="#000" stop-opacity="0.4"/></linearGradient><filter id="bl4" x="-20%" y="-20%" width="140%" height="140%"><feGaussianBlur stdDeviation="2.5"/></filter><filter id="bl4b"><feGaussianBlur stdDeviation="0.6"/></filter><radialGradient id="f4" cx="0.5" cy="0.45" r="0.6"><stop offset="0" stop-color="#dea294"/><stop offset="0.7" stop-color="#d4948a"/><stop offset="1" stop-color="#bc7e74"/></radialGradient><pattern id="pt4" width="3.4" height="3.6" patternUnits="userSpaceOnUse"><rect width="3.4" height="3.6" fill="#d2cfda"/><ellipse cx="1.7" cy="1.8" rx="1.0" ry="1.2" fill="none" stroke="#5e5670" stroke-width="0.55"/></pattern></defs><rect width="290" height="156" fill="url(#bg4)"/><rect width="290" height="156" fill="url(#bg4b)"/><g filter="url(#bl4)" opacity="0.55"><path d="M38 88 L75 84 L66 100Z" fill="#d0d0ce"/><path d="M92 98 L122 90 L110 128Z" fill="#c4c4c2"/><ellipse cx="45" cy="122" rx="22" ry="10" fill="#c8c8c6"/><ellipse cx="20" cy="90" rx="22" ry="7" fill="#c4c4c2"/><ellipse cx="100" cy="140" rx="18" ry="10" fill="#a4a4a2"/><path d="M0 156 L22 124 L50 156Z" fill="#808080"/><path d="M150 100 L140 60 L165 75Z" fill="#e0e0de"/></g><g filter="url(#bl4b)"><path d="M133 156 L135 138 C138 122 148 112 170 106 L188 99 L239 93 C258 96 272 100 280 108 C287 118 290 136 290 156Z" fill="url(#pt4)"/><path d="M193 109 C206 112 228 112 239 108 L238 156 L197 156Z" fill="#6f91af"/><path d="M211.4 8.3 C200 8.5 194 12 188 18 C181 26 176 40 172 55 C170 60 166 61 163.4 63.7 C166 66 169 68 170 71 C170 76 170 80 172 84 C174 90 178 93 182 95 C186 97 190 98 194 97 L236 97.8 C242 98 246 97 250 95 C255 92 258 89 258.5 86 C259 80 257 75 256.6 72 C256 62 254 52 251 42 C248 30 242 20 234 14 C228 10 220 8 211.4 8.3Z" fill="#4a3c35"/><path d="M196 74 L231 74 L233 106 C226 111 206 111 197 106Z" fill="#cc9484"/><path d="M189 44 C189 31 198 26 211 26 C226 26 235 31 235.5 46 L235 64 C234 76 226 84 212 85 C198 84 190 76 189.5 64Z" fill="url(#f4)"/><path d="M187 48 C188 34 196 24 210 22 C224 22 232 28 236 48 C230 38 222 33 212 32 C202 31 194 36 187 48Z" fill="#4a3c35"/><path d="M195 98.5 C202 104 208 107 215 107 C222 107 228 104 233 98.5" stroke="#3a3440" stroke-width="0.9" fill="none"/><path d="M196 46 C199 45 203 45 206 46 M218 46 C221 45 225 45 228 46" stroke="#8a5a50" stroke-width="1.2" fill="none"/><ellipse cx="200.5" cy="49" rx="2.8" ry="1.1" fill="#5a6a8a"/><ellipse cx="223" cy="49" rx="2.8" ry="1.1" fill="#5a6a8a"/><path d="M208 53 L206 60 C209 62 214 62 217 60" stroke="#b87a70" stroke-width="1.1" fill="none"/><path d="M201 68 C207 66.5 216 66.5 222 68" stroke="#a86a64" stroke-width="1.5" fill="none"/></g><g font-family="Liberation Sans" font-weight="bold" fill="#fff" font-size="17.6" stroke="#fff" stroke-width="0.35"><text x="15.5" y="28.5" textLength="138.3" lengthAdjust="spacing">HOW TO COPE</text><text x="15.5" y="50.5" textLength="159.1" lengthAdjust="spacing">WITH RELIGIOUS</text><text x="15.5" y="72.5" textLength="106" lengthAdjust="spacing">CONFLICTS</text></g></svg></div>
<div class="t" style="left:23.00px;top:114.10px;font-size:28px;line-height:34px;letter-spacing:0.082px;color:#1c1c1c;">Bestehendes Video aus Opencast einfügen</div>
<div class="t" style="left:44.20px;top:176.01px;font-size:17px;line-height:20px;letter-spacing:-0.04px;color:#1c1c1c;font-style:italic;">Textfilter</div>
<div class="t" style="left:311.20px;top:175.91px;font-size:17px;line-height:20px;letter-spacing:-0.608px;color:#1c1c1c;font-style:italic;">Serie</div>
<div class="t" style="left:543.10px;top:175.81px;font-size:17px;line-height:20px;letter-spacing:-0.229px;color:#1c1c1c;font-style:italic;">Start</div>
<div class="t" style="left:543.10px;top:202.10px;font-size:15px;line-height:18px;letter-spacing:1.09px;color:#1c1c1c;">Von</div>
<div class="t" style="left:542.10px;top:258.00px;font-size:15px;line-height:18px;letter-spacing:0.781px;color:#1c1c1c;">Bis</div>
<div class="t" style="left:556.00px;top:231.26px;font-size:16px;line-height:19px;letter-spacing:0.025px;color:#bbb;">DD.MM.YYYY</div>
<div class="t" style="left:556.00px;top:287.16px;font-size:16px;line-height:19px;letter-spacing:0.025px;color:#bbb;">DD.MM.YYYY</div>
<div class="t" style="left:324.00px;top:209.51px;font-size:17px;line-height:20px;letter-spacing:0.205px;color:#1c1c1c;">Featured (...30d2)</div>
<div class="t" style="left:57.10px;top:342.56px;font-size:18px;line-height:22px;letter-spacing:0.073px;color:#3a3a3a;">Filter anwenden</div>
<div class="t" style="left:216.92px;top:342.56px;font-size:18px;line-height:22px;letter-spacing:-0.073px;color:#3a3a3a;">Filter zurücksetzen</div>
<div class="t" style="left:1210.20px;top:413.08px;font-size:16.5px;line-height:20px;letter-spacing:0.683px;color:#1c1c1c;">Spalten</div>
<div class="t" style="left:34.28px;top:454.07px;font-size:20px;line-height:24px;letter-spacing:0.779px;color:#1c1c1c;">Vorschau</div>
<div class="t" style="left:346.92px;top:454.07px;font-size:20px;line-height:24px;letter-spacing:1.071px;color:#1c1c1c;">Titel</div>
<div class="t" style="left:641.46px;top:454.07px;font-size:20px;line-height:24px;letter-spacing:1.255px;color:#1c1c1c;">Untertitel</div>
<div class="t" style="left:754.76px;top:454.07px;font-size:20px;line-height:24px;letter-spacing:0.483px;color:#1c1c1c;">Serie</div>
<div class="t" style="left:973.84px;top:454.07px;font-size:20px;line-height:24px;letter-spacing:0.755px;color:#1c1c1c;">Start</div>
<div class="t" style="left:1101.46px;top:454.07px;font-size:20px;line-height:24px;letter-spacing:1.176px;color:#1c1c1c;">Aufnahmestation</div>
<div class="t" style="left:346.28px;top:509.57px;font-size:20px;line-height:24px;letter-spacing:0.77px;color:#1c1c1c;">Podcasts optimal nutzen</div>
<div class="t" style="left:756.28px;top:509.57px;font-size:20px;line-height:24px;letter-spacing:0.413px;color:#1c1c1c;">cd4460e3-152c-</div>
<div class="t" style="left:756.28px;top:538.42px;font-size:20px;line-height:24px;letter-spacing:0.467px;color:#1c1c1c;">41be-bc09-</div>
<div class="t" style="left:755.28px;top:567.27px;font-size:20px;line-height:24px;letter-spacing:0.677px;color:#1c1c1c;">6a24338730d2</div>
<div class="t" style="left:974.92px;top:509.57px;font-size:20px;line-height:24px;letter-spacing:0.414px;color:#1c1c1c;">04.08.2022</div>
<div class="t" style="left:973.92px;top:538.42px;font-size:20px;line-height:24px;letter-spacing:0.413px;color:#1c1c1c;">14:05:29</div>
<div class="t" style="left:346.28px;top:688.97px;font-size:20px;line-height:24px;letter-spacing:0.382px;color:#1c1c1c;">Control Insect Pests - The</div>
<div class="t" style="left:347.28px;top:717.82px;font-size:20px;line-height:24px;letter-spacing:0.811px;color:#1c1c1c;">Western Corn Rootworm</div>
<div class="t" style="left:756.28px;top:688.97px;font-size:20px;line-height:24px;letter-spacing:0.413px;color:#1c1c1c;">cd4460e3-152c-</div>
<div class="t" style="left:756.28px;top:717.82px;font-size:20px;line-height:24px;letter-spacing:0.467px;color:#1c1c1c;">41be-bc09-</div>
<div class="t" style="left:755.28px;top:746.67px;font-size:20px;line-height:24px;letter-spacing:0.677px;color:#1c1c1c;">6a24338730d2</div>
<div class="t" style="left:974.92px;top:688.97px;font-size:20px;line-height:24px;letter-spacing:0.414px;color:#1c1c1c;">08.08.2022</div>
<div class="t" style="left:974.72px;top:717.82px;font-size:20px;line-height:24px;letter-spacing:0.299px;color:#1c1c1c;">21:05:06</div>
<div class="t" style="left:346.28px;top:868.57px;font-size:20px;line-height:24px;letter-spacing:0.244px;color:#1c1c1c;">Banks &amp; Financial Crises Ex-</div>
<div class="t" style="left:346.28px;top:897.42px;font-size:20px;line-height:24px;letter-spacing:1.164px;color:#1c1c1c;">plained</div>
<div class="t" style="left:756.28px;top:868.57px;font-size:20px;line-height:24px;letter-spacing:0.413px;color:#1c1c1c;">cd4460e3-152c-</div>
<div class="t" style="left:756.28px;top:897.42px;font-size:20px;line-height:24px;letter-spacing:0.467px;color:#1c1c1c;">41be-bc09-</div>
<div class="t" style="left:755.28px;top:926.27px;font-size:20px;line-height:24px;letter-spacing:0.677px;color:#1c1c1c;">6a24338730d2</div>
<div class="t" style="left:974.92px;top:868.57px;font-size:20px;line-height:24px;letter-spacing:0.414px;color:#1c1c1c;">08.08.2022</div>
<div class="t" style="left:974.72px;top:897.42px;font-size:20px;line-height:24px;letter-spacing:0.299px;color:#1c1c1c;">21:03:53</div>
<div class="t" style="left:346.28px;top:1048.27px;font-size:20px;line-height:24px;letter-spacing:0.595px;color:#1c1c1c;">How to Cope with Religious</div>
<div class="t" style="left:346.28px;top:1077.12px;font-size:20px;line-height:24px;letter-spacing:0.645px;color:#1c1c1c;">Conflicts: Insights from His-</div>
<div class="t" style="left:347.28px;top:1105.97px;font-size:20px;line-height:24px;letter-spacing:1.427px;color:#1c1c1c;">tory</div>
<div class="t" style="left:756.28px;top:1048.27px;font-size:20px;line-height:24px;letter-spacing:0.413px;color:#1c1c1c;">cd4460e3-152c-</div>
<div class="t" style="left:756.28px;top:1077.12px;font-size:20px;line-height:24px;letter-spacing:0.467px;color:#1c1c1c;">41be-bc09-</div>
<div class="t" style="left:755.28px;top:1105.97px;font-size:20px;line-height:24px;letter-spacing:0.677px;color:#1c1c1c;">6a24338730d2</div>
<div class="t" style="left:974.92px;top:1048.27px;font-size:20px;line-height:24px;letter-spacing:0.414px;color:#1c1c1c;">04.08.2022</div>
<div class="t" style="left:973.92px;top:1077.12px;font-size:20px;line-height:24px;letter-spacing:0.527px;color:#1c1c1c;">12:35:42</div>
<svg width="150" height="92" style="position:absolute;left:1120px;top:516px" viewBox="1120 516 150 92"><path d="M1126.7 561.7 C1152 543 1184 520 1216 519.9 A41.85 41.85 0 1 1 1216 603.6 C1184 603.5 1152 580.5 1126.7 561.7Z" fill="#9d4f93"/><path d="M1206.8 544.7 L1212.9 544.7 L1212.9 583 L1206.8 583 L1206.8 556.2 L1197.6 556.2 L1197.6 551.7 C1203 551.5 1205.6 549.5 1206.8 544.7Z" fill="#fff"/></svg>
</body></html>
